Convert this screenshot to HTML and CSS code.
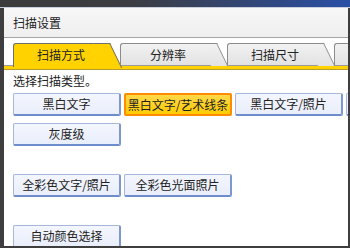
FILE: index.html
```html
<!DOCTYPE html>
<html lang="zh-CN">
<head>
<meta charset="utf-8">
<title>扫描设置</title>
<link rel="stylesheet" href="styles.css">
</head>
<body>
<div class="win">
  <div class="topbar"></div>
  <div class="panel">
    <div class="title">扫描设置</div>
    <div class="tabs">
      <div class="tab tab-on"><span>扫描方式</span></div>
      <div class="tab"><span>分辨率</span></div>
      <div class="tab"><span>扫描尺寸</span></div>
      <div class="tab"></div>
    </div>
    <div class="band"></div>
    <div class="content">
      <div class="label">选择扫描类型。</div>
      <div class="row row1">
        <div class="btn">黑白文字</div>
        <div class="btn btn-on">黑白文字/艺术线条</div>
        <div class="btn">黑白文字/照片</div>
        <div class="btn"></div>
      </div>
      <div class="row row2">
        <div class="btn">灰度级</div>
      </div>
      <div class="row row3">
        <div class="btn">全彩色文字/照片</div>
        <div class="btn">全彩色光面照片</div>
      </div>
      <div class="row row4">
        <div class="btn">自动颜色选择</div>
      </div>
    </div>
  </div>
</div>
</body>
</html>
```

FILE: styles.css
```css
html, body {
  margin: 0;
  padding: 0;
  background: #ffffff;
}

body {
  font-family: "Noto Sans CJK SC", "Noto Sans", sans-serif;
  color: #222222;
}

.win {
  width: 350px;
  height: 248px;
  display: flex;
  flex-direction: column;
  background: #3e3e3e;
  overflow: hidden;
}

.topbar {
  height: 7px;
  flex: none;
  background: linear-gradient(to right, #3c3c3c 0%, #3c3d42 38%, #2a4fa6 100%);
  border-bottom: 1px solid #c9cfdc;
}

.panel {
  flex: 1;
  margin: 0 2px 2px 4px;
  background: #ffffff;
  display: flex;
  flex-direction: column;
  overflow: hidden;
  min-height: 0;
}

.title {
  height: 29px;
  flex: none;
  background: linear-gradient(#f7f7f7, #efefef);
  border-bottom: 1px solid #a4a4a4;
  padding-left: 9px;
  font-size: 12px;
  line-height: 29px;
}

.tabs {
  height: 22px;
  flex: none;
  display: flex;
  align-items: flex-start;
  padding: 5px 0 0 9px;
  overflow: visible;
}

.tab {
  position: relative;
  flex: none;
  width: 95px;
  height: 22px;
  margin-right: 12px;
  background: linear-gradient(#f2f2f2, #e2e2e2);
  border-top: 1px solid #8c8c8c;
  border-left: 1px solid #8c8c8c;
  border-top-left-radius: 3px;
  box-sizing: border-box;
  font-size: 12px;
  line-height: 22px;
  text-align: center;
}

.tab::after {
  content: "";
  position: absolute;
  top: -1px;
  left: 79px;
  width: 16px;
  height: 22px;
  background: linear-gradient(#f2f2f2, #e2e2e2);
  border-top: 1px solid #8c8c8c;
  border-right: 1px solid #8c8c8c;
  transform-origin: top left;
  transform: skewX(26deg);
}

.tab span {
  position: relative;
  z-index: 1;
}

.tab-on {
  height: 24px;
  z-index: 2;
  background: #ffd200;
  border-color: #6e6e6e;
}

.tab-on::after {
  height: 24px;
  background: #ffd200;
  border-color: #6e6e6e;
  z-index: 0;
}

.band {
  height: 3px;
  flex: none;
  background: #ffd200;
  border-top: 1px solid #9a9a9a;
  border-bottom: 1px solid #b89a2a;
}

.content {
  padding: 3px 0 0 9px;
  display: flex;
  flex-direction: column;
}

.label {
  font-size: 12px;
  line-height: 16px;
  height: 16px;
}

.row {
  display: flex;
  gap: 3px;
  width: 500px;
}

.row1 { margin-top: 4px; }
.row2 { margin-top: 7px; }
.row3 { margin-top: 28px; }
.row4 { margin-top: 28px; }

.btn {
  flex: none;
  width: 108px;
  height: 23px;
  box-sizing: border-box;
  background: linear-gradient(#f4f6fe, #e9eefb);
  border: 1px solid #a7b7dc;
  border-right: 2px solid #7f97cf;
  border-bottom: 2px solid #6d8ccc;
  border-radius: 2px;
  font-size: 12px;
  line-height: 20px;
  text-align: center;
  white-space: nowrap;
}

.btn-on {
  background: linear-gradient(#ffd84a, #ffcc00);
  border: 2px solid #ff8c00;
  line-height: 19px;
}
```
